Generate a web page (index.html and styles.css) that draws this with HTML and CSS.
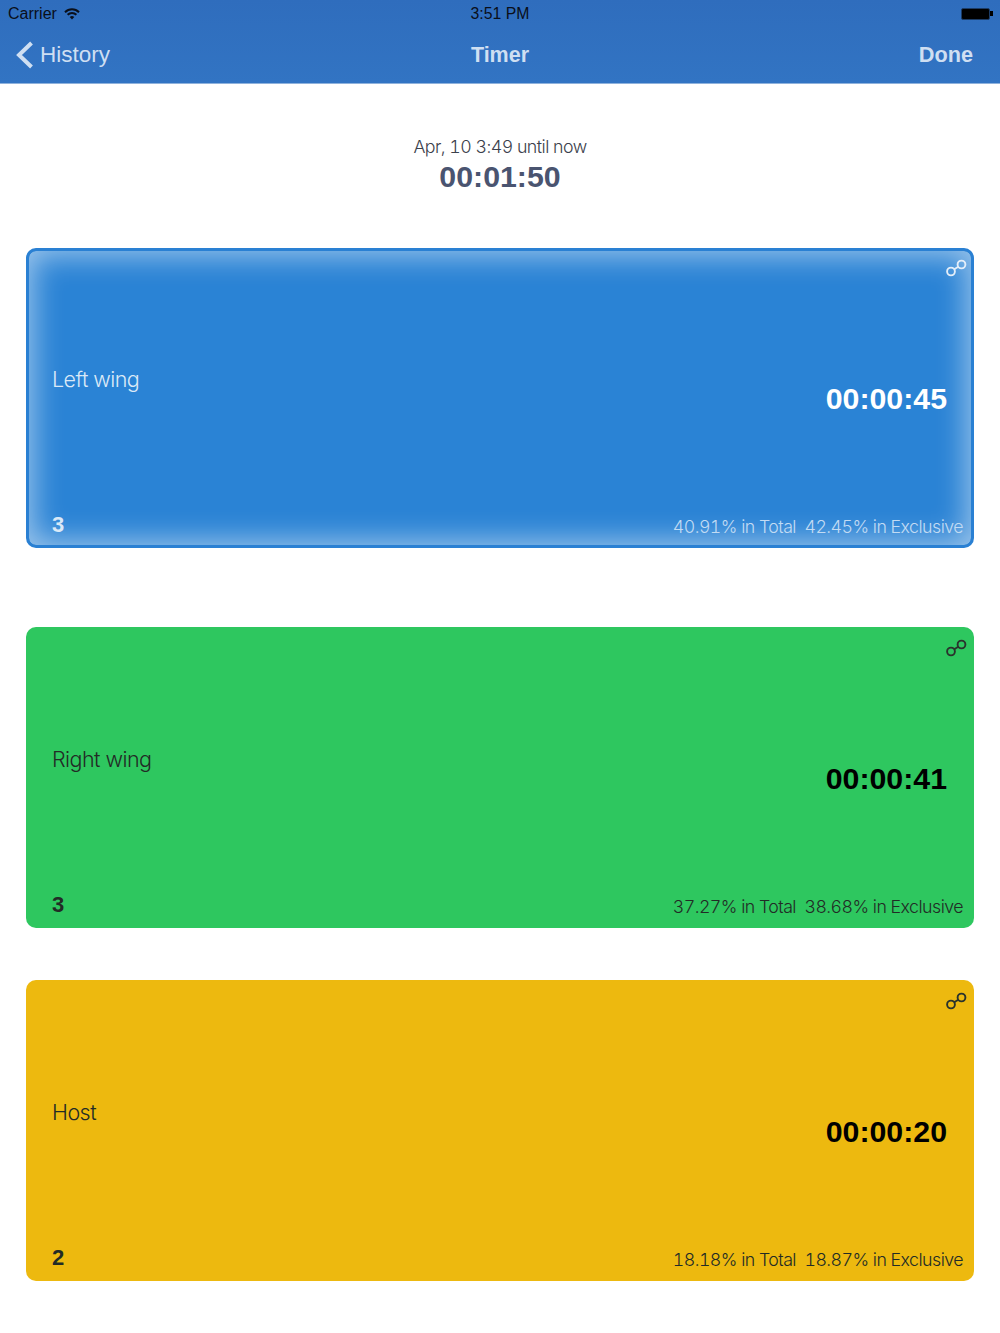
FILE: index.html
```html
<!DOCTYPE html>
<html lang="en">
  <head>
    <meta charset="UTF-8" />
    <meta name="viewport" content="width=device-width, initial-scale=1.0" />
    <title>Timer</title>
    <link rel="stylesheet" href="styles.css">
  </head>
  <body>
    <div class="header">
      <div class="status">
        <div class="carrier">
          <span>Carrier</span>
          <svg class="wifi" width="16" height="12" viewBox="0 0 16 12">
            <path d="M1 4.2a10 10 0 0 1 14 0" />
            <path d="M3.6 6.8a6.3 6.3 0 0 1 8.8 0" />
            <path class="dot" d="M8 11.5 5.7 9.1a3.2 3.2 0 0 1 4.6 0z" />
          </svg>
        </div>
        <span class="clock">3:51 PM</span>
        <div class="battery-wrap">
          <div class="battery"></div>
          <div class="nub"></div>
        </div>
      </div>
      <div class="nav">
        <div class="back">
          <svg width="18" height="28" viewBox="0 0 18 28">
            <path d="M15.500 2 3 14l12.500 12" />
          </svg>
          <span>History</span>
        </div>
        <div class="title">Timer</div>
        <div class="done">Done</div>
      </div>
    </div>

    <div class="summary">
      <div class="range">Apr, 10 3:49 until now</div>
      <div class="total">00:01:50</div>
    </div>

    <div class="cards">
      <div class="card blue active">
        <svg class="link" width="22" height="18" viewBox="0 0 22 18">
          <circle cx="6" cy="12.500" r="3.900" />
          <circle cx="16.500" cy="5.500" r="3.900" />
          <path d="M9.200 10.300 13.300 7.700" />
        </svg>
        <div class="name">Left wing</div>
        <div class="time">00:00:45</div>
        <div class="count">3</div>
        <div class="stats">40.91% in Total&nbsp;&nbsp;42.45% in Exclusive</div>
      </div>

      <div class="card green">
        <svg class="link" width="22" height="18" viewBox="0 0 22 18">
          <circle cx="6" cy="12.500" r="3.900" />
          <circle cx="16.500" cy="5.500" r="3.900" />
          <path d="M9.200 10.300 13.300 7.700" />
        </svg>
        <div class="name">Right wing</div>
        <div class="time">00:00:41</div>
        <div class="count">3</div>
        <div class="stats">37.27% in Total&nbsp;&nbsp;38.68% in Exclusive</div>
      </div>

      <div class="card yellow">
        <svg class="link" width="22" height="18" viewBox="0 0 22 18">
          <circle cx="6" cy="12.500" r="3.900" />
          <circle cx="16.500" cy="5.500" r="3.900" />
          <path d="M9.200 10.300 13.300 7.700" />
        </svg>
        <div class="name">Host</div>
        <div class="time">00:00:20</div>
        <div class="count">2</div>
        <div class="stats">18.18% in Total&nbsp;&nbsp;18.87% in Exclusive</div>
      </div>
    </div>
  </body>
</html>
```

FILE: styles.css
```css
* {
  box-sizing: border-box;
}
body {
  margin: 0;
  background: #fff;
  font-family: "Liberation Sans", Arial, sans-serif;
}
.header {
  height: 84px;
  background: linear-gradient(#2f6dbd, #3274c3);
  border-bottom: 1px solid #8fb2dc;
}
.status {
  height: 27px;
  padding: 0 7px 0 8px;
  display: grid;
  grid-template-columns: 1fr auto 1fr;
  align-items: center;
  font-size: 16px;
  color: #0a0f1a;
}
.clock {
  font-size: 15.800px;
  margin-left: -1px;
}
.carrier {
  display: flex;
  align-items: center;
  gap: 7px;
}
.wifi {
  fill: none;
  stroke: #0a0f1a;
  stroke-width: 2;
}
.wifi .dot {
  fill: #0a0f1a;
  stroke: none;
}
.battery-wrap {
  justify-self: end;
  display: flex;
  align-items: center;
}
.battery {
  width: 29px;
  height: 12px;
  background: #000;
  border: 1px solid #1c3c66;
  border-radius: 2px;
}
.nub {
  width: 3px;
  height: 5px;
  background: #000;
}
.nav {
  height: 56px;
  padding: 0 16px;
  display: grid;
  grid-template-columns: 1fr auto 1fr;
  align-items: center;
  color: #cfdff2;
  font-size: 22.500px;
}
.back {
  display: flex;
  align-items: center;
  gap: 6px;
}
.back svg {
  fill: none;
  stroke: #cfdff2;
  stroke-width: 4;
}
.title {
  font-weight: bold;
  font-size: 21.500px;
}
.done {
  justify-self: end;
  margin-right: 11px;
  font-weight: bold;
  font-size: 21.700px;
}
.summary {
  padding-top: 52px;
  height: 164px;
  text-align: center;
}
.range {
  font-family: Inter, "Liberation Sans", sans-serif;
  font-weight: 300;
  font-variant-numeric: tabular-nums;
  letter-spacing: -0.03em;
  font-size: 17.800px;
  color: #3c414c;
  line-height: 21px;
}
.total {
  font-size: 30.300px;
  font-weight: bold;
  color: #4a5470;
  line-height: 40px;
}
.cards {
  padding: 0 26px;
  display: flex;
  flex-direction: column;
  gap: 52px;
}
.card {
  position: relative;
  height: 301px;
  border-radius: 10px;
  padding: 0 11px 10px 26px;
  display: grid;
  grid-template-columns: 1fr auto;
  grid-template-rows: 1fr auto;
  color: #222b26;
}
.blue {
  background: #2a83d5;
  color: #dbe9f7;
}
.active {
  height: 300px;
  margin-bottom: 27px;
  border: 3px solid #2a80d3;
  padding: 0 8px 7px 23px;
  box-shadow: inset 0 0 30px 4px rgba(255, 255, 255, 0.55);
}
.green {
  background: #2ec75f;
}
.yellow {
  background: #edb90f;
}
.link {
  position: absolute;
  top: 11.500px;
  right: 7px;
  fill: none;
  stroke: #2a332d;
  stroke-width: 1.900;
}
.active .link {
  top: 7.500px;
  right: 4.500px;
  stroke: #e4eef9;
}
.name {
  align-self: center;
  font-family: Inter, "Liberation Sans", sans-serif;
  font-weight: 300;
  letter-spacing: -0.025em;
  font-size: 21.500px;
  padding-top: 36px;
  margin-bottom: 38px;
}
.active .name {
  padding-top: 32px;
}
.time {
  align-self: center;
  justify-self: end;
  font-size: 30.300px;
  font-weight: bold;
  color: #000;
  padding-top: 38px;
  padding-right: 16px;
}
.active .time {
  padding-top: 34px;
}
.blue .time {
  color: #fff;
}
.count {
  font-size: 22px;
  font-weight: bold;
}
.stats {
  font-family: Inter, "Liberation Sans", sans-serif;
  font-weight: 300;
  font-variant-numeric: tabular-nums;
  letter-spacing: -0.03em;
  font-size: 17.750px;
  align-self: end;
  margin-bottom: 1px;
}
.blue .stats {
  color: #c2dbf3;
}
```
